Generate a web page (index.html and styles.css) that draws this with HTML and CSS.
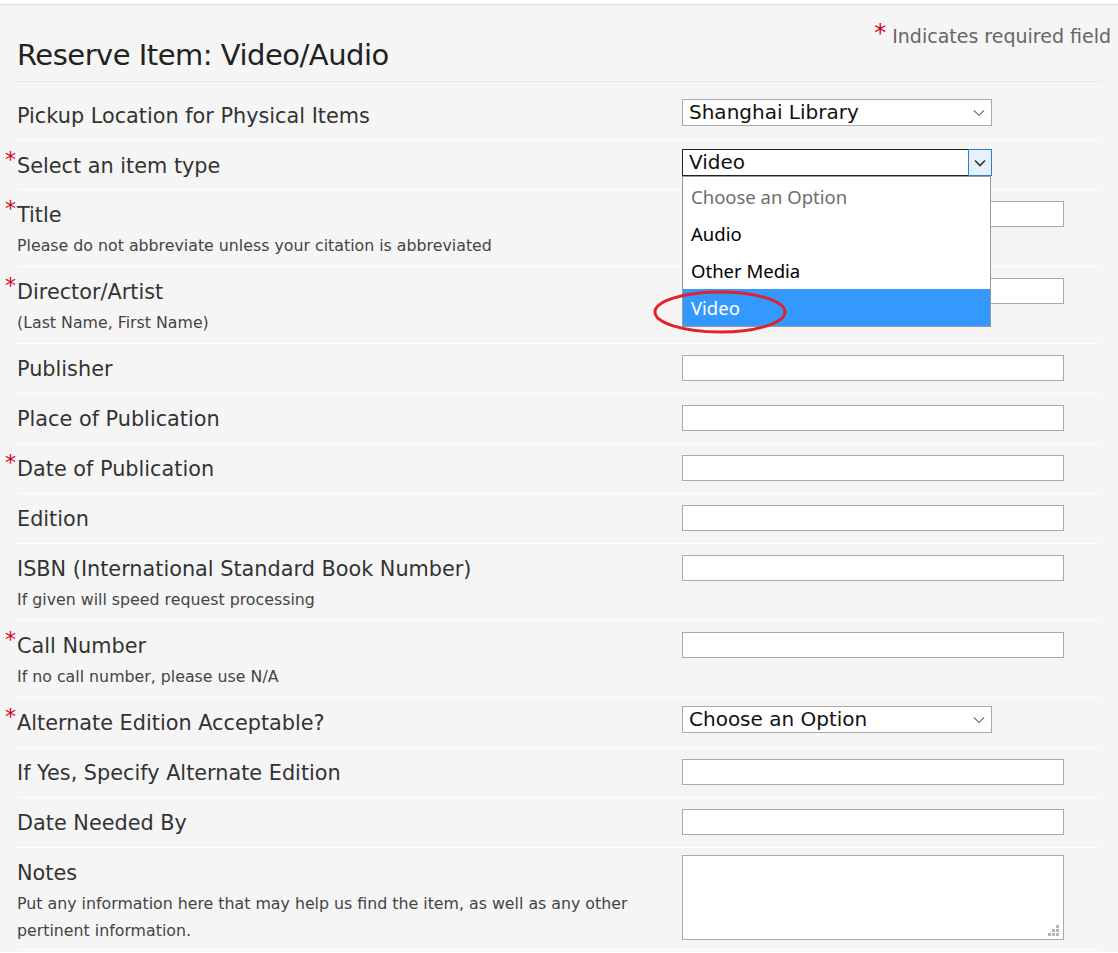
FILE: index.html
```html
<!DOCTYPE html>
<html lang="en">
<head>
<meta charset="utf-8">
<title>Reserve Item: Video/Audio</title>
<link rel="stylesheet" href="styles.css">
</head>
<body>
<div class="page">
  <div class="header">
    <h1>Reserve Item: Video/Audio</h1>
    <p class="req-note"><span class="note-star">*</span> Indicates required field</p>
  </div>

  <div class="form">
    <div class="row first">
      <div class="label-col"><div class="label">Pickup Location for Physical Items</div></div>
      <div class="field-col">
        <div class="select"><span class="select-text">Shanghai Library</span>
          <svg class="chev" width="12" height="8" viewBox="0 0 12 8"><polyline points="1,1.5 6,6.5 11,1.5" fill="none" stroke="#777" stroke-width="1.2"/></svg>
        </div>
      </div>
    </div>

    <div class="row second">
      <div class="label-col"><div class="label"><span class="req">*</span>Select an item type</div></div>
      <div class="field-col">
        <div class="select focused"><span class="select-text">Video</span>
          <span class="sel-btn"><svg width="12" height="8" viewBox="0 0 12 8"><polyline points="1,1.5 6,6.5 11,1.5" fill="none" stroke="#333" stroke-width="1.6"/></svg></span>
          <div class="dropdown">
            <div class="opt placeholder">Choose an Option</div>
            <div class="opt">Audio</div>
            <div class="opt">Other Media</div>
            <div class="opt active">Video</div>
            <svg class="circle" width="140" height="48" viewBox="0 0 140 48"><ellipse cx="68" cy="23" rx="65" ry="20" fill="none" stroke="#e3202b" stroke-width="3"/></svg>
          </div>
        </div>
      </div>
    </div>

    <div class="row">
      <div class="label-col"><div class="label"><span class="req">*</span>Title</div><div class="help">Please do not abbreviate unless your citation is abbreviated</div></div>
      <div class="field-col"><input class="text" type="text"></div>
    </div>

    <div class="row">
      <div class="label-col"><div class="label"><span class="req">*</span>Director/Artist</div><div class="help">(Last Name, First Name)</div></div>
      <div class="field-col"><input class="text" type="text"></div>
    </div>

    <div class="row">
      <div class="label-col"><div class="label">Publisher</div></div>
      <div class="field-col"><input class="text" type="text"></div>
    </div>

    <div class="row">
      <div class="label-col"><div class="label">Place of Publication</div></div>
      <div class="field-col"><input class="text" type="text"></div>
    </div>

    <div class="row">
      <div class="label-col"><div class="label"><span class="req">*</span>Date of Publication</div></div>
      <div class="field-col"><input class="text" type="text"></div>
    </div>

    <div class="row">
      <div class="label-col"><div class="label">Edition</div></div>
      <div class="field-col"><input class="text" type="text"></div>
    </div>

    <div class="row">
      <div class="label-col"><div class="label">ISBN (International Standard Book Number)</div><div class="help">If given will speed request processing</div></div>
      <div class="field-col"><input class="text" type="text"></div>
    </div>

    <div class="row">
      <div class="label-col"><div class="label"><span class="req">*</span>Call Number</div><div class="help">If no call number, please use N/A</div></div>
      <div class="field-col"><input class="text" type="text"></div>
    </div>

    <div class="row">
      <div class="label-col"><div class="label"><span class="req">*</span>Alternate Edition Acceptable?</div></div>
      <div class="field-col">
        <div class="select"><span class="select-text">Choose an Option</span>
          <svg class="chev" width="12" height="8" viewBox="0 0 12 8"><polyline points="1,1.5 6,6.5 11,1.5" fill="none" stroke="#777" stroke-width="1.2"/></svg>
        </div>
      </div>
    </div>

    <div class="row">
      <div class="label-col"><div class="label">If Yes, Specify Alternate Edition</div></div>
      <div class="field-col"><input class="text" type="text"></div>
    </div>

    <div class="row">
      <div class="label-col"><div class="label">Date Needed By</div></div>
      <div class="field-col"><input class="text" type="text"></div>
    </div>

    <div class="row notes">
      <div class="label-col"><div class="label">Notes</div><div class="help notes-help">Put any information here that may help us find the item, as well as any other pertinent information.</div></div>
      <div class="field-col">
        <div class="ta-wrap">
          <textarea class="ta"></textarea>
          <svg class="grip" width="12" height="12" viewBox="0 0 12 12" fill="#b5b5b5">
            <rect x="8" y="0" width="3" height="3"/>
            <rect x="4" y="4" width="3" height="3"/><rect x="8" y="4" width="3" height="3"/>
            <rect x="0" y="8" width="3" height="3"/><rect x="4" y="8" width="3" height="3"/><rect x="8" y="8" width="3" height="3"/>
          </svg>
        </div>
      </div>
    </div>
  </div>
</div>
</body>
</html>
```

FILE: styles.css
```css
html, body {
  margin: 0;
  padding: 0;
  background: #ffffff;
}

body {
  font-family: "DejaVu Sans", "Open Sans", sans-serif;
  color: #333;
}

.page {
  margin-top: 4px;
  border-top: 1px solid #dcdcdc;
  background: #f5f5f5;
  padding-left: 17px;
  min-height: 948px;
  box-sizing: border-box;
}

.header {
  width: 1083px;
  display: flex;
  justify-content: space-between;
  align-items: flex-start;
  border-bottom: 1px solid #e8e8e8;
  padding-top: 13px;
  padding-bottom: 9px;
}

h1 {
  margin: 20px 0 0 0;
  font-size: 29px;
  line-height: 34px;
  font-weight: 400;
  letter-spacing: -0.5px;
  color: #222;
}

.req-note {
  margin: 6px -11px 0 0;
  font-size: 19px;
  line-height: 24px;
  color: #666;
}

.note-star {
  color: #d0021b;
  font-size: 24px;
  vertical-align: top;
  line-height: 18px;
}

.form {
  width: 1083px;
}

.row {
  display: flex;
  padding: 11px 0 10px 0;
  border-bottom: 1px solid #ffffff;
}

.row.first {
  padding-top: 20px;
}

.row.second {
  padding-bottom: 9px;
}

.label-col {
  flex: 0 0 665px;
}

.field-col {
  flex: 1;
}

.label {
  font-size: 20.8px;
  line-height: 28px;
  color: #333;
}

.req {
  display: inline-block;
  width: 12px;
  margin-left: -12px;
  color: #d0021b;
  font-size: 22px;
  line-height: 16px;
  vertical-align: top;
}

.help {
  font-size: 15.8px;
  line-height: 27px;
  color: #444;
  margin-top: 3px;
  margin-bottom: -3px;
}

.notes-help {
  width: 640px;
}

.select {
  position: relative;
  box-sizing: border-box;
  width: 310px;
  height: 27px;
  margin-top: -3px;
  background: #fff;
  border: 1px solid #a9a9a9;
  display: flex;
  align-items: center;
  padding-left: 6px;
}

.select-text {
  font-size: 20px;
  color: #111;
  flex: 1;
  line-height: 25px;
}

.chev {
  margin-right: 6px;
}

.select.focused {
  border-color: #222;
}

.sel-btn {
  align-self: stretch;
  width: 22px;
  margin: -1px -1px -1px 0;
  border: 1px solid #2a7fd4;
  background: #e5f1fb;
  display: flex;
  align-items: center;
  justify-content: center;
}

.dropdown {
  position: absolute;
  top: 26px;
  left: -1px;
  width: 309px;
  box-sizing: border-box;
  background: #fff;
  border: 1px solid #999;
  padding-top: 1px;
}

.opt {
  height: 37px;
  line-height: 37px;
  padding-left: 8px;
  font-family: "Noto Sans", "Open Sans", sans-serif;
  font-size: 18.5px;
  color: #000;
}

.opt.placeholder {
  color: #6d6d6d;
}

.opt.active {
  background: #3399ff;
  color: #fff;
}

.circle {
  position: absolute;
  left: -31px;
  top: 112px;
}

.text {
  display: block;
  box-sizing: border-box;
  width: 382px;
  height: 26px;
  margin: 0;
  border: 1px solid #a9a9a9;
  background: #fff;
  padding: 0 4px;
  font-size: 16px;
}

.row.notes {
  padding-bottom: 8px;
}

.ta-wrap {
  position: relative;
  width: 382px;
  height: 85px;
  margin-top: -4px;
}

.ta {
  display: block;
  box-sizing: border-box;
  width: 382px;
  height: 85px;
  margin: 0;
  border: 1px solid #a9a9a9;
  background: #fff;
  resize: none;
}

.grip {
  position: absolute;
  right: 4px;
  bottom: 3px;
}
```
